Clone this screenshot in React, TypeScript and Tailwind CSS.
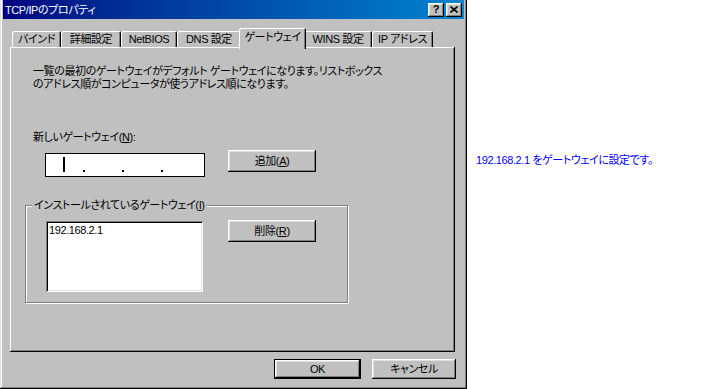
const font = "[font-family:'Liberation_Sans','Noto_Sans_CJK_JP',sans-serif] [font-feature-settings:'palt'] tracking-[-0.4px]";
const raised = "bg-[#c0c0c0] shadow-[inset_-1px_-1px_#000,inset_1px_1px_#fff,inset_-2px_-2px_#808080,inset_2px_2px_#dfdfdf]";
const sunken = "bg-white shadow-[inset_1px_1px_#808080,inset_-1px_-1px_#fff,inset_2px_2px_#000,inset_-2px_-2px_#dfdfdf]";

const tabs = [
  { label: 'バインド', w: 'w-[49px]' },
  { label: '詳細設定', w: 'w-[60px]' },
  { label: 'NetBIOS', w: 'w-[56px]' },
  { label: 'DNS 設定', w: 'w-[64px]' },
  { label: 'ゲートウェイ', w: 'w-[67px]', active: true },
  { label: 'WINS 設定', w: 'w-[68px]' },
  { label: 'IP アドレス', w: 'w-[61px]' },
];

function Button({ children, className = '' }: { children: React.ReactNode; className?: string }) {
  return (
    <div className={`flex items-center justify-center text-[11px] leading-none text-black ${raised} ${className}`}>
      {children}
    </div>
  );
}

export default function App() {
  return (
    <div className={`flex w-[715px] h-[389px] bg-white overflow-hidden ${font}`}>
      {/* Dialog */}
      <div className="flex flex-col w-[467px] h-[389px] shrink-0 px-[3px] pb-[3px] bg-[#c0c0c0] shadow-[inset_-1px_-1px_#000,inset_1px_0_#dfdfdf,inset_-2px_-2px_#808080,inset_2px_0_#fff]">
        {/* Title bar */}
        <div className="flex items-center h-[19px] pl-[2px] pr-[2px] bg-gradient-to-r from-[#000080] to-[#1084d0]">
          <span className="flex-1 pt-[2px] text-[11px] leading-none text-white">TCP/IPのプロパティ</span>
          <div className={`flex items-center justify-center w-[16px] h-[14px] ${raised}`}>
            <span className="text-[11px] font-bold leading-none text-black tracking-normal">?</span>
          </div>
          <div className={`ml-[2px] flex items-center justify-center w-[16px] h-[14px] ${raised}`}>
            <svg width="8" height="7" viewBox="0 0 8 7">
              <path d="M0.5 0.5 L7.5 6.5 M7.5 0.5 L0.5 6.5" stroke="#000" strokeWidth="1.6" />
            </svg>
          </div>
        </div>

        {/* Tabs */}
        <div className="flex items-end mt-[9px] ml-[9px] h-[19px]">
          {tabs.map((t) =>
            t.active ? (
              <div
                key={t.label}
                className={`relative z-10 -mx-[2px] -mb-[2px] h-[21px] pb-[3px] ${t.w} flex items-center justify-center bg-[#c0c0c0] rounded-t-[2px] text-[11px] leading-none shadow-[inset_1px_1px_#fff,inset_-1px_0_#000,inset_-2px_0_#808080]`}
              >
                {t.label}
              </div>
            ) : (
              <div
                key={t.label}
                className={`h-[16px] ${t.w} flex items-center justify-center bg-[#c0c0c0] rounded-t-[2px] text-[11px] leading-none shadow-[inset_1px_1px_#fff,inset_-1px_0_#000,inset_-2px_0_#808080]`}
              >
                {t.label}
              </div>
            )
          )}
        </div>

        {/* Panel */}
        <div className="flex flex-col ml-[7px] mr-[9px] h-[305px] pt-[18px] pl-[15px] bg-[#c0c0c0] text-black shadow-[inset_-1px_-1px_#000,inset_1px_1px_#fff,inset_-2px_-2px_#808080]">
          <p className="ml-[8px] text-[11px] leading-[13px]">
            一覧の最初のゲートウェイがデフォルト ゲートウェイになります。リストボックス
            <br />
            のアドレス順がコンピュータが使うアドレス順になります。
          </p>

          <p className="mt-[40px] ml-[8px] text-[11px] leading-[13px]">
            新しいゲートウェイ(<span className="underline">N</span>):
          </p>

          <div className="flex items-start mt-[6px] ml-[20px]">
            <div className="mt-[3px] flex items-start w-[160px] h-[24px] bg-white border border-black">
              <div className="w-[37px] pl-[17px] pt-[3px]">
                <div className="w-[2px] h-[15px] bg-black" />
              </div>
              <div className="mt-[16px] w-[2px] h-[2px] bg-black" />
              <div className="w-[37px]" />
              <div className="mt-[16px] w-[2px] h-[2px] bg-black" />
              <div className="w-[37px]" />
              <div className="mt-[16px] w-[2px] h-[2px] bg-black" />
            </div>
            <Button className="ml-[23px] w-[88px] h-[22px]">
              追加(<span className="underline">A</span>)
            </Button>
          </div>

          {/* Installed gateways group */}
          <div className="relative mt-[28px] w-[323px] h-[98px] border border-[#808080] shadow-[inset_1px_1px_#fff,1px_1px_#fff]">
            <span className="absolute -top-[8px] left-[6px] px-[2px] bg-[#c0c0c0] text-[11px] leading-[14px]">
              インストールされているゲートウェイ(<span className="underline">I</span>)
            </span>
            <div className="flex items-start pt-[14px] pl-[20px]">
              <div className={`mt-[1px] w-[157px] h-[71px] pt-[3px] pl-[3px] text-[11px] leading-[13px] ${sunken}`}>
                192.168.2.1
              </div>
              <Button className="ml-[25px] w-[88px] h-[22px]">
                削除(<span className="underline">R</span>)
              </Button>
            </div>
          </div>
        </div>

        {/* Footer */}
        <div className="flex justify-end gap-[11px] mt-[7px] pr-[8px]">
          <div className="w-[87px] h-[20px] border border-black">
            <Button className="w-full h-full">OK</Button>
          </div>
          <Button className="w-[84px] h-[20px]">キャンセル</Button>
        </div>
      </div>

      {/* Note */}
      <div className="pt-[153px] pl-[9px] text-[11px] leading-[14px] text-[#0000ff]">
        192.168.2.1 をゲートウェイに設定です。
      </div>
    </div>
  );
}
